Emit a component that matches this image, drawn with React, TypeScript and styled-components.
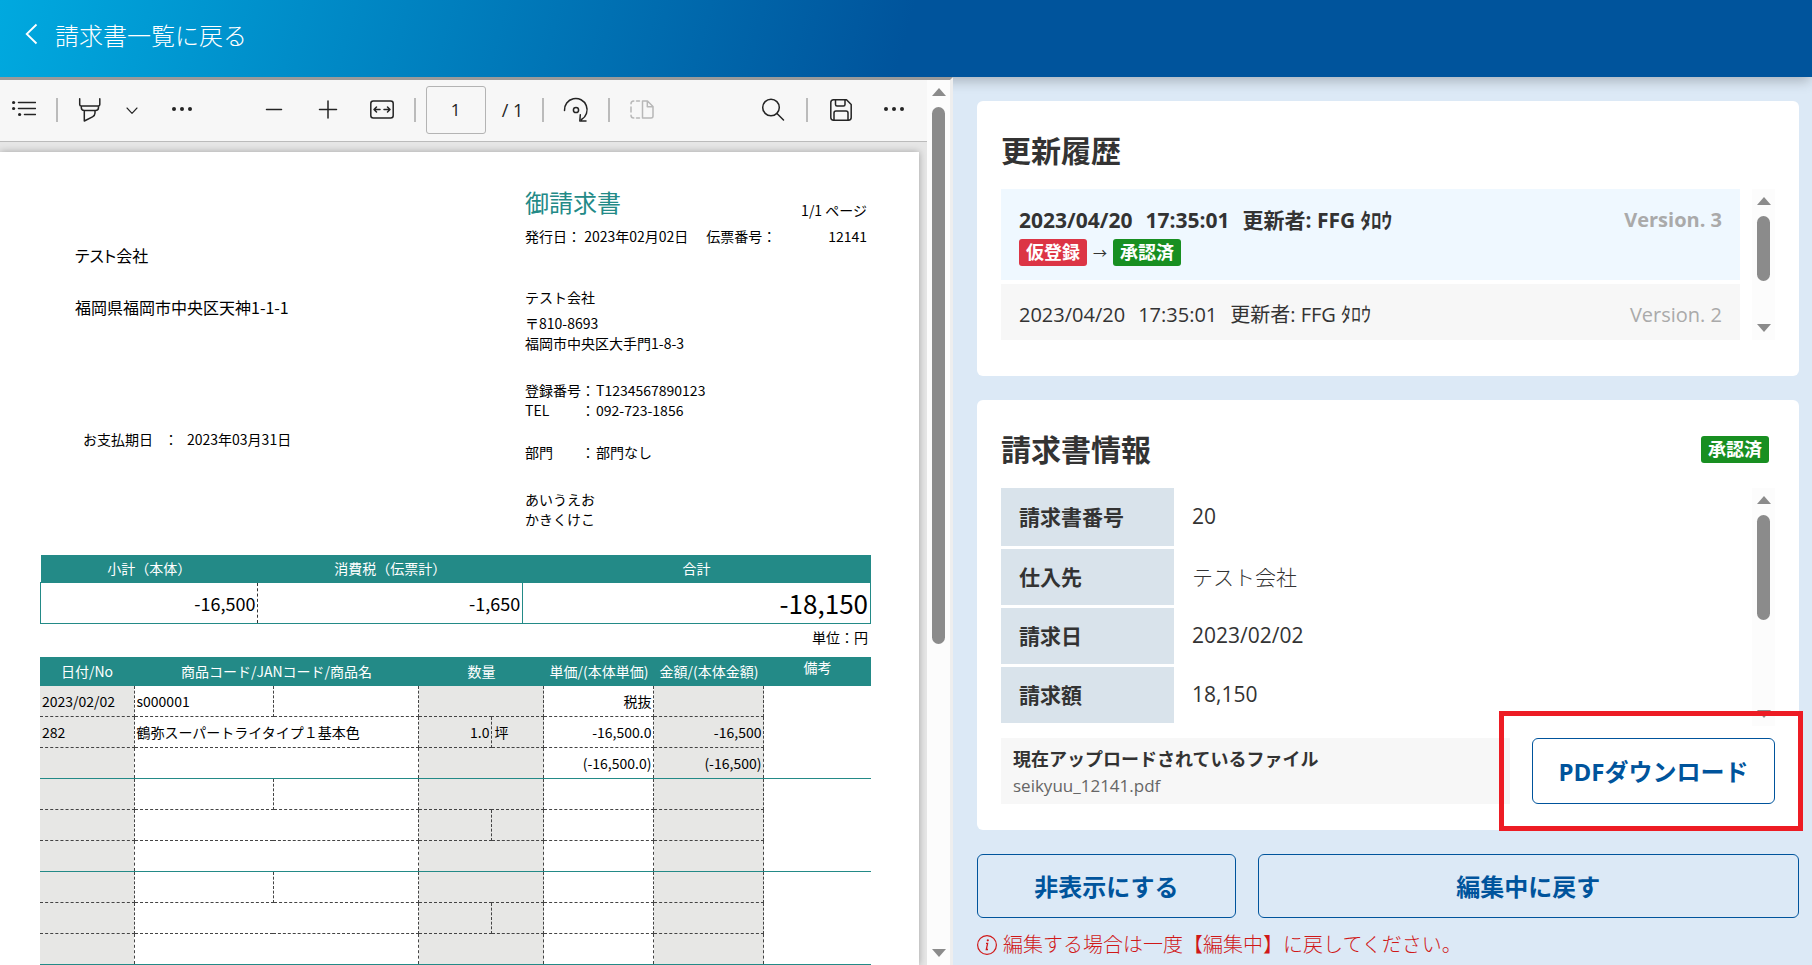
import React from "react";
import styled, { createGlobalStyle, css } from "styled-components";

const ui = `"Open Sans", "Noto Sans CJK JP", sans-serif`;
const doc = `"Noto Sans CJK JP", sans-serif`;
const teal = "#238a87";
const navy = "#00549c";

const GlobalStyle = createGlobalStyle`
  * { box-sizing: border-box; }
  body { margin: 0; background: #dce9f6; color: #333; font-family: ${ui}; }
  button, input { font-family: inherit; color: inherit; }
  h1, h2, p { margin: 0; }
`;

const Page = styled.div`
  display: flex;
  flex-direction: column;
  height: 100vh;
  overflow: hidden;
`;

const Header = styled.header`
  flex: none;
  position: relative;
  z-index: 1;
  height: 77px;
  padding: 0 23px;
  background: linear-gradient(105deg, #00a9df, ${navy} 50%);
  box-shadow: 0 6px 12px -2px rgba(0, 0, 0, 0.24);
`;

const BackLink = styled.a`
  display: inline-flex;
  align-items: center;
  gap: 16px;
  height: 68px;
  color: #fff;
  font-size: 24px;
  font-weight: 300;
  text-decoration: none;
`;

const Main = styled.main`
  flex: 1;
  min-height: 0;
  display: grid;
  grid-template-columns: minmax(0, 953fr) minmax(0, 859fr);
`;

/* ---------- scroll bar ---------- */

const Track = styled.div`
  flex: none;
  display: flex;
  flex-direction: column;
  align-items: center;
  width: 23px;
  padding: 8px 0;
  background: #fcfcfc;
`;

const Thumb = styled.div<{ $share: number }>`
  width: 13px;
  height: ${(p) => p.$share}%;
  margin: 11px 0 auto;
  border-radius: 7px;
  background: #8b8b8b;
`;

const Arrow = styled.svg`
  flex: none;
  width: 14px;
  height: 8px;
  fill: #8b8b8b;
`;

const ScrollBar = ({ share }: { share: number }) => (
  <Track aria-hidden="true">
    <Arrow viewBox="0 0 14 8"><path d="M7 0 14 8H0Z" /></Arrow>
    <Thumb $share={share} />
    <Arrow viewBox="0 0 14 8"><path d="M0 0H14L7 8Z" /></Arrow>
  </Track>
);

/* ---------- PDF viewer ---------- */

const Viewer = styled.section`
  position: relative;
  z-index: 2;
  display: flex;
  min-height: 0;
  border-top: 3px solid #9a9a9a;
  border-right: 3px solid #eee;
  background: #e6e6e6;
`;

const ViewerBody = styled.div`
  flex: 1;
  min-width: 0;
  display: flex;
  flex-direction: column;
`;

const Toolbar = styled.div`
  flex: none;
  display: flex;
  align-items: center;
  height: 62px;
  padding: 0 13px 2px 6px;
  border-bottom: 1px solid #bbb;
  background: #f7f7f7;
  color: #242424;
`;

const Tools = styled.div<{ $gap: number }>`
  display: flex;
  align-items: center;
  gap: ${(p) => p.$gap}px;
`;

const Spacer = styled.div<{ $grow: number }>`
  flex: ${(p) => p.$grow};
`;

const ToolButton = styled.button<{ $width?: number }>`
  display: flex;
  align-items: center;
  justify-content: center;
  width: ${(p) => p.$width ?? 36}px;
  height: 36px;
  padding: 0;
  border: 0;
  background: none;
  color: inherit;
  &:disabled { color: #b8b8b8; }
`;

const Divider = styled.span`
  width: 2px;
  height: 24px;
  background: #bbb;
`;

const PageInput = styled.input`
  width: 60px;
  height: 48px;
  padding: 0;
  border: 1px solid #b4b4b4;
  border-radius: 3px;
  background: #f7f7f7;
  font-size: 17px;
  text-align: center;
`;

const PageTotal = styled.span`
  width: 32px;
  padding-left: 6px;
  font-size: 18px;
  white-space: nowrap;
`;

const Icon = ({ size = 24, children }: { size?: number; children: React.ReactNode }) => (
  <svg width={size} height={size} viewBox={`0 0 ${size} ${size}`} fill="none" stroke="currentColor" strokeWidth="1.5" strokeLinecap="round" strokeLinejoin="round" aria-hidden="true">
    {children}
  </svg>
);

const Dots = () => (
  <Icon>
    <g fill="currentColor" stroke="none">
      <circle cx="4" cy="11" r="2" /><circle cx="12" cy="11" r="2" /><circle cx="20" cy="11" r="2" />
    </g>
  </Icon>
);

const ViewerToolbar = () => (
  <Toolbar>
    <Tools $gap={14}>
      <ToolButton aria-label="目次">
        <Icon>
          <g fill="currentColor" stroke="none">
            <circle cx="1.6" cy="4.5" r="1.6" /><circle cx="1.6" cy="10.5" r="1.6" /><circle cx="7.6" cy="16.5" r="1.6" />
          </g>
          <path d="M6.5 4.5H23.5M6.5 10.5H23.5M12.5 16.5H23.5" />
        </Icon>
      </ToolButton>
      <Divider />
      <ToolButton aria-label="強調表示">
        <Icon>
          <path d="M1.7 .8V6.500Q1.700 8 3.200 8H20.300Q21.800 8 21.800 6.500V.8M3.300 8V9.500Q3.300 12.500 6.300 12.500H17.500Q20.500 12.500 20.500 9.500V8M6.300 12.500V23L14.500 18.800Q17 17.500 17 15V12.500" />
        </Icon>
      </ToolButton>
      <ToolButton $width={20} aria-label="強調表示の色">
        <Icon size={12}><path d="M1 4 6 9.300 11 4" strokeWidth="1.100" /></Icon>
      </ToolButton>
      <ToolButton $width={52} aria-label="その他のツール"><Dots /></ToolButton>
    </Tools>
    <Spacer $grow={1} />
    <Tools $gap={14}>
      <Tools $gap={18}>
        <ToolButton aria-label="縮小"><Icon><path d="M4.500 11.500H19.500" /></Icon></ToolButton>
        <ToolButton aria-label="拡大"><Icon><path d="M3.500 11.500H20.500M12 3V20" /></Icon></ToolButton>
        <ToolButton aria-label="幅に合わせる">
          <Icon>
            <rect x=".8" y="3" width="22.400" height="17" rx="2.500" />
            <path d="M10 11.500H4.200M6.500 9 4 11.500 6.500 14M14 11.500H19.800M17.500 9 20 11.500 17.500 14" />
          </Icon>
        </ToolButton>
      </Tools>
      <Tools $gap={10}>
        <Divider />
        <PageInput aria-label="ページ番号" defaultValue="1" />
        <PageTotal>/ 1</PageTotal>
      </Tools>
      <Divider />
      <ToolButton aria-label="回転">
        <Icon size={26}>
          <path d="M1.500 13.500A11.300 11.300 0 1 1 18.500 22.500M17.300 17.800 16.800 24H23" />
          <circle cx="13" cy="13" r="2.600" />
        </Icon>
      </ToolButton>
      <Divider />
      <ToolButton disabled aria-label="ページビュー">
        <Icon>
          <path d="M12.500 3H17.500L23 8.500V18Q23 20 21 20H12.500ZM17.300 3V8.800H23" />
          <path d="M9.500 3H6.500M3.800 3Q1 3 1 5.800M1 9V14M1 17.200Q1 20 3.800 20M6.500 20H9.500" />
        </Icon>
      </ToolButton>
    </Tools>
    <Spacer $grow={2} />
    <Tools $gap={15}>
      <ToolButton aria-label="検索">
        <Icon><circle cx="10" cy="9.500" r="8.300" /><path d="M16 15.500 22.500 22" /></Icon>
      </ToolButton>
      <Divider />
      <ToolButton aria-label="保存">
        <Icon>
          <path d="M4 1.800H17.500L22.200 6.500V19.500Q22.200 22.200 19.500 22.200H4.500Q1.800 22.200 1.800 19.500V4.500Q1.800 1.800 4.500 1.800ZM6.500 2V6.500Q6.500 8 8 8H14.500Q16 8 16 6.500V2M5 22V15Q5 13 7 13H17Q19 13 19 15V22" />
        </Icon>
      </ToolButton>
      <ToolButton $width={40} aria-label="設定など"><Dots /></ToolButton>
    </Tools>
  </Toolbar>
);

/* ---------- invoice sheet ---------- */

const Desk = styled.div`
  flex: 1;
  min-height: 0;
  padding: 10px 8px 0 0;
  overflow: hidden;
`;

const Sheet = styled.article`
  min-height: 100%;
  padding: 0 48px 0 40px;
  background: #fff;
  box-shadow: 0 0 7px rgba(0, 0, 0, 0.3);
  color: #000;
  font-family: ${doc};
  font-size: 14px;
  line-height: 20px;
`;

const SheetTop = styled.div`
  display: grid;
  grid-template-columns: minmax(0, 485fr) minmax(0, 346fr);
  margin-bottom: 26px;
`;

const Recipient = styled.div`
  display: flex;
  flex-direction: column;
  padding: 93px 0 0 35px;
  font-size: 16px;
  font-feature-settings: "palt";
`;

const Address = styled.p`
  margin-top: 32px;
`;

const DueDate = styled.div`
  display: flex;
  margin: 112px 0 0 8px;
  font-size: 14px;
  font-feature-settings: normal;
`;

const DueMark = styled.span`
  margin: 0 9px 0 11px;
`;

const Issuer = styled.div`
  display: flex;
  flex-direction: column;
  padding: 32px 4px 0 0;
`;

const IssuerLine = styled.div`
  display: flex;
  align-items: flex-end;
  justify-content: space-between;
`;

const SlipLine = styled.div`
  display: grid;
  grid-template-columns: auto auto 1fr;
  column-gap: 18px;
`;

const SlipNumber = styled.span`
  text-align: right;
`;

const SheetTitle = styled.h1`
  color: ${teal};
  font-size: 24px;
  font-weight: 400;
  line-height: 36px;
`;

const Block = styled.div<{ $top: number }>`
  margin-top: ${(p) => p.$top}px;
`;

const Field = styled.div`
  display: grid;
  grid-template-columns: 56px 15px 1fr;
`;

const SummaryTable = styled.table`
  width: 100%;
  table-layout: fixed;
  border-collapse: collapse;
  th {
    height: 27px;
    padding: 0;
    background: ${teal};
    color: #fff;
    font-weight: 400;
  }
  td {
    height: 41px;
    padding: 0 2px;
    border: 1px solid ${teal};
    font-size: 18px;
    text-align: right;
  }
  td:first-child { border-right: 1px dashed #333; }
  td:nth-child(2) { border-left: 1px dashed #333; }
  td:last-child { font-size: 26px; }
`;

const Unit = styled.p`
  margin-bottom: 6px;
  padding-right: 3px;
  line-height: 27px;
  text-align: right;
`;

const LineTable = styled.table`
  width: 100%;
  table-layout: fixed;
  border-collapse: collapse;
  th {
    height: 29px;
    padding: 0;
    background: ${teal};
    color: #fff;
    font-weight: 400;
    white-space: nowrap;
  }
  th:last-child { padding-bottom: 9px; }
`;

const Cell = styled.td<{ $shade?: boolean; $end?: boolean; $right?: boolean; $open?: boolean }>`
  height: 31px;
  padding: 0 2px;
  border-right: 1px dashed #444;
  border-bottom: 1px ${(p) => (p.$end ? `solid ${teal}` : "dashed #444")};
  background: ${(p) => (p.$shade ? "#e7e7e5" : "#fff")};
  text-align: ${(p) => (p.$right ? "right" : "left")};
  white-space: nowrap;
  ${(p) => p.$open && css`border-right: 0;`}
`;

type Line = { date?: string; no?: string; code?: string; name?: string; qty?: string; unit?: string; tax?: string; price?: string; base?: string; sum?: string; baseSum?: string };

const lines: Line[] = [
  { date: "2023/02/02", no: "282", code: "s000001", name: "鶴弥スーパートライタイプ１基本色", qty: "1.0", unit: "坪", tax: "税抜", price: "-16,500.0", base: "(-16,500.0)", sum: "-16,500", baseSum: "(-16,500)" },
  {},
  {},
];

const Invoice = () => (
  <Sheet>
    <SheetTop>
      <Recipient>
        <p>テスト会社</p>
        <Address>福岡県福岡市中央区天神1-1-1</Address>
        <DueDate><span>お支払期日</span><DueMark>：</DueMark><span>2023年03月31日</span></DueDate>
      </Recipient>
      <Issuer>
        <IssuerLine><SheetTitle>御請求書</SheetTitle><span>1/1 ページ</span></IssuerLine>
        <Block $top={6}>
          <SlipLine><span>発行日： 2023年02月02日</span><span>伝票番号：</span><SlipNumber>12141</SlipNumber></SlipLine>
        </Block>
        <Block $top={41}>テスト会社</Block>
        <Block $top={6}><p>〒810-8693</p><p>福岡市中央区大手門1-8-3</p></Block>
        <Block $top={27}>
          <Field><span>登録番号</span><span>：</span><span>T1234567890123</span></Field>
          <Field><span>TEL</span><span>：</span><span>092-723-1856</span></Field>
        </Block>
        <Block $top={22}><Field><span>部門</span><span>：</span><span>部門なし</span></Field></Block>
        <Block $top={27}><p>あいうえお</p><p>かきくけこ</p></Block>
      </Issuer>
    </SheetTop>

    <SummaryTable>
      <colgroup><col style={{ width: "26.2%" }} /><col style={{ width: "31.9%" }} /><col /></colgroup>
      <thead><tr><th>小計（本体）</th><th>消費税（伝票計）</th><th>合計</th></tr></thead>
      <tbody><tr><td>-16,500</td><td>-1,650</td><td>-18,150</td></tr></tbody>
    </SummaryTable>
    <Unit>単位：円</Unit>

    <LineTable>
      <colgroup>
        {[94, 139, 146, 73, 52, 110, 110, 107].map((w, i) => <col key={i} style={{ width: `${(w / 831) * 100}%` }} />)}
      </colgroup>
      <thead>
        <tr>
          <th>日付/No</th><th colSpan={2}>商品コード/JANコード/商品名</th><th colSpan={2}>数量</th>
          <th>単価/(本体単価)</th><th>金額/(本体金額)</th><th>備考</th>
        </tr>
      </thead>
      <tbody>
        {lines.map((l, i) => (
          <React.Fragment key={i}>
            <tr>
              <Cell $shade>{l.date}</Cell><Cell>{l.code}</Cell><Cell /><Cell $shade colSpan={2} />
              <Cell $right>{l.tax}</Cell><Cell $shade /><Cell rowSpan={3} $end $open />
            </tr>
            <tr>
              <Cell $shade>{l.no}</Cell><Cell colSpan={2}>{l.name}</Cell><Cell $shade $right>{l.qty}</Cell><Cell $shade>{l.unit}</Cell>
              <Cell $right>{l.price}</Cell><Cell $shade $right>{l.sum}</Cell>
            </tr>
            <tr>
              <Cell $shade $end /><Cell $end colSpan={2} /><Cell $shade $end colSpan={2} />
              <Cell $end $right>{l.base}</Cell><Cell $shade $end $right>{l.baseSum}</Cell>
            </tr>
          </React.Fragment>
        ))}
      </tbody>
    </LineTable>
  </Sheet>
);

/* ---------- side panel ---------- */

const Panel = styled.section`
  display: flex;
  flex-direction: column;
  gap: 24px;
  min-height: 0;
  padding: 24px 13px 0 24px;
`;

const Card = styled.section`
  padding: 27px 24px 26px;
  border-radius: 6px;
  background: #fff;
`;

const CardHead = styled.div`
  display: flex;
  align-items: center;
  justify-content: space-between;
  margin-bottom: 16px;
  padding-right: 6px;
`;

const CardTitle = styled.h2`
  font-size: 30px;
  font-weight: 700;
  line-height: 45px;
`;

const Badge = styled.span<{ $tone: "red" | "green" }>`
  display: inline-block;
  width: 68px;
  border-radius: 3px;
  background: ${(p) => (p.$tone === "red" ? "#dc3545" : "#188f21")};
  color: #fff;
  font-size: 18px;
  font-weight: 700;
  line-height: 27px;
  text-align: center;
`;

const ScrollArea = styled.div<{ $height: number; $gapBelow: number }>`
  display: flex;
  gap: 12px;
  height: ${(p) => p.$height}px;
  margin-bottom: ${(p) => p.$gapBelow}px;
  overflow: hidden;
`;

const HistoryList = styled.ul`
  flex: 1;
  display: flex;
  flex-direction: column;
  gap: 4px;
  margin: 0;
  padding: 0;
  list-style: none;
`;

const HistoryItem = styled.li<{ $current?: boolean }>`
  padding: 16px 18px 14px;
  background: ${(p) => (p.$current ? "#eff8ff" : "#f7f7f7")};
  font-size: ${(p) => (p.$current ? 21 : 20)}px;
  font-weight: ${(p) => (p.$current ? 700 : 400)};
`;

const HistoryLine = styled.div`
  display: flex;
  gap: 13px;
  line-height: 30px;
`;

const Version = styled.span`
  margin-left: auto;
  color: #aaa;
  font-size: 20px;
`;

const StatusChange = styled.div`
  display: flex;
  align-items: center;
  gap: 6px;
  margin-top: 4px;
  font-size: 14px;
  font-weight: 400;
  line-height: 27px;
`;

const InfoWrap = styled.div`
  flex: 1;
`;

const InfoTable = styled.table`
  width: 100%;
  border-collapse: collapse;
  th, td {
    height: 59px;
    padding: 0 18px 2px;
    border-bottom: 3px solid #fff;
    font-size: 21px;
    text-align: left;
  }
  th {
    width: 173px;
    background: #d9e3eb;
    background-clip: padding-box;
    font-weight: 700;
  }
`;

const InfoValue = styled.td<{ $light?: boolean }>`
  font-weight: ${(p) => (p.$light ? 300 : 400)};
`;

const FileRow = styled.div`
  display: flex;
  gap: 22px;
`;

const FileBox = styled.div`
  flex: 1;
  padding: 8px 12px 5px;
  background: #f7f7f7;
`;

const FileLabel = styled.p`
  font-size: 18px;
  font-weight: 700;
  line-height: 26px;
`;

const FileName = styled.p`
  color: #666;
  font-size: 17px;
  line-height: 27px;
`;

const OutlineButton = styled.button<{ $grow?: number; $white?: boolean }>`
  flex: ${(p) => p.$grow ?? 0} 1 0;
  height: 64px;
  padding: 0 0 2px;
  border: 1px solid ${navy};
  border-radius: 6px;
  background: ${(p) => (p.$white ? "#fff" : "transparent")};
  color: ${navy};
  font-size: 24px;
  font-weight: 700;
`;

const DownloadButton = styled(OutlineButton)`
  display: block;
  width: 243px;
  height: 66px;
`;

const Highlight = styled.div`
  position: relative;
  &::after {
    content: "";
    position: absolute;
    inset: -27px -28px -27px -33px;
    border: 5px solid #ed1c24;
    pointer-events: none;
  }
`;

const Actions = styled.div`
  display: flex;
  gap: 22px;
`;

const Notice = styled.p`
  display: flex;
  align-items: center;
  gap: 6px;
  margin-top: -12px;
  color: #d01818;
  font-size: 20px;
  font-weight: 300;
  line-height: 30px;
`;

const SidePanel = () => (
  <Panel>
    <Card>
      <CardHead><CardTitle>更新履歴</CardTitle></CardHead>
      <ScrollArea $height={151} $gapBelow={10}>
        <HistoryList>
          <HistoryItem $current>
            <HistoryLine><span>2023/04/20</span><span>17:35:01</span><span>更新者: FFG ﾀﾛｳ</span><Version>Version. 3</Version></HistoryLine>
            <StatusChange><Badge $tone="red">仮登録</Badge><span>→</span><Badge $tone="green">承認済</Badge></StatusChange>
          </HistoryItem>
          <HistoryItem>
            <HistoryLine><span>2023/04/20</span><span>17:35:01</span><span>更新者: FFG ﾀﾛｳ</span><Version>Version. 2</Version></HistoryLine>
          </HistoryItem>
        </HistoryList>
        <ScrollBar share={48.5} />
      </ScrollArea>
    </Card>

    <Card>
      <CardHead><CardTitle>請求書情報</CardTitle><Badge $tone="green">承認済</Badge></CardHead>
      <ScrollArea $height={238} $gapBelow={12}>
        <InfoWrap>
          <InfoTable>
            <tbody>
              <tr><th scope="row">請求書番号</th><InfoValue>20</InfoValue></tr>
              <tr><th scope="row">仕入先</th><InfoValue $light>テスト会社</InfoValue></tr>
              <tr><th scope="row">請求日</th><InfoValue>2023/02/02</InfoValue></tr>
              <tr><th scope="row">請求額</th><InfoValue>18,150</InfoValue></tr>
            </tbody>
          </InfoTable>
        </InfoWrap>
        <ScrollBar share={47.3} />
      </ScrollArea>
      <FileRow>
        <FileBox>
          <FileLabel>現在アップロードされているファイル</FileLabel>
          <FileName>seikyuu_12141.pdf</FileName>
        </FileBox>
        <Highlight><DownloadButton $white>PDFダウンロード</DownloadButton></Highlight>
      </FileRow>
    </Card>

    <Actions>
      <OutlineButton $grow={258}>非表示にする</OutlineButton>
      <OutlineButton $grow={542}>編集中に戻す</OutlineButton>
    </Actions>
    <Notice>
      <svg width="20" height="20" viewBox="0 0 20 20" fill="none" stroke="currentColor" aria-hidden="true">
        <circle cx="10" cy="10" r="9.400" strokeWidth="1.200" />
        <path d="M9 8.300H10.600L9.300 14.500H11" strokeWidth="1.300" />
        <circle cx="10.800" cy="5.300" r="1.100" fill="currentColor" stroke="none" />
      </svg>
      編集する場合は一度【編集中】に戻してください。
    </Notice>
  </Panel>
);

export default function App() {
  return (
    <Page>
      <GlobalStyle />
      <Header>
        <BackLink href="#list">
          <svg width="16" height="22" viewBox="0 0 16 22" fill="none" stroke="currentColor" strokeWidth="1.800" aria-hidden="true"><path d="M13.500 1.500 3.700 11 13.500 20.500" /></svg>
          請求書一覧に戻る
        </BackLink>
      </Header>
      <Main>
        <Viewer>
          <ViewerBody>
            <ViewerToolbar />
            <Desk><Invoice /></Desk>
          </ViewerBody>
          <ScrollBar share={61.8} />
        </Viewer>
        <SidePanel />
      </Main>
    </Page>
  );
}
